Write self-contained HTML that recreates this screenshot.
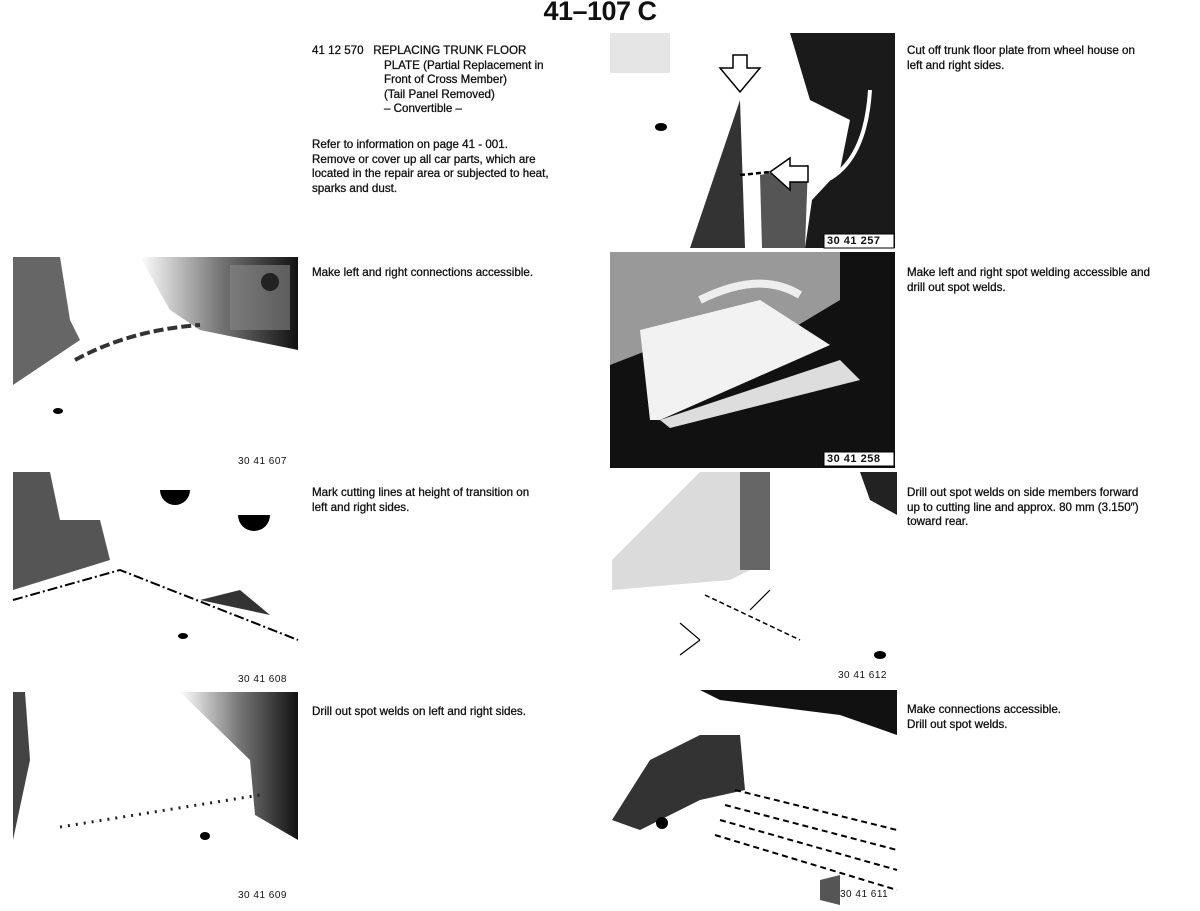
<!DOCTYPE html>
<html><head><meta charset="utf-8"><style>
html,body{margin:0;padding:0;background:#fff;}
body{width:1200px;height:911px;position:relative;overflow:hidden;font-family:"Liberation Sans",sans-serif;color:#111;}
.t{position:absolute;font-size:11.6px;line-height:14.6px;white-space:nowrap;-webkit-text-stroke:0.3px #111;}
.lbl{position:absolute;font-size:10px;letter-spacing:0.5px;white-space:nowrap;}
h1{position:absolute;left:0;width:1200px;top:-4px;margin:0;text-align:center;font-size:27px;font-weight:bold;letter-spacing:-0.5px;}
svg{position:absolute;left:0;top:0;}
svg path{fill:none;}
</style></head><body>
<svg width="1200" height="911" viewBox="0 0 1200 911">
<defs>
<linearGradient id="gL" x1="0" x2="1"><stop offset="0" stop-color="#fff"/><stop offset="0.5" stop-color="#777"/><stop offset="1" stop-color="#111"/></linearGradient>
</defs>
<!-- top right photo 30 41 257 -->
<rect x="610" y="33" width="285" height="215" fill="#fff"/>
<rect x="610" y="33" width="60" height="40" fill="#ccc" opacity="0.5"/>
<polygon points="790,33 895,33 895,248 805,248 812,200 840,170 850,120 810,100" fill="#1a1a1a"/>
<polygon points="690,248 740,100 745,248" fill="#333"/>
<polygon points="760,175 808,165 805,248 762,248" fill="#555"/>
<path d="M815,185 Q865,170 870,90" stroke="#fff" stroke-width="4"/>
<ellipse cx="661" cy="127" rx="6" ry="4" fill="#000"/>
<polygon points="733,55 747,55 747,68 760,68 740,92 720,68 733,68" fill="#fff" stroke="#000" stroke-width="1.5"/>
<path d="M740,175 L770,172" stroke="#000" stroke-width="2.5" stroke-dasharray="5,3"/>
<polygon points="770,172 790,158 790,166 808,166 808,182 790,182 790,190" fill="#fff" stroke="#000" stroke-width="1.5"/>
<rect x="824" y="234" width="70" height="14" fill="#fff" stroke="#000"/>
<!-- photo 30 41 258 -->
<rect x="610" y="252" width="285" height="216" fill="#111"/>
<polygon points="610,252 840,252 840,300 790,330 700,330 610,365" fill="#999"/>
<polygon points="640,330 760,300 830,345 660,420 650,420" fill="#f2f2f2"/>
<polygon points="660,420 840,360 860,380 670,428" fill="#ddd"/>
<path d="M700,300 Q760,270 800,295" stroke="#eee" stroke-width="8"/>
<rect x="824" y="452" width="70" height="14" fill="#fff" stroke="#000"/>
<!-- left photo 30 41 607 -->
<rect x="13" y="257" width="285" height="190" fill="#fff"/>
<polygon points="13,257 60,257 70,320 80,340 13,385" fill="#666"/>
<polygon points="140,257 298,257 298,350 200,330 170,310" fill="url(#gL)"/>
<rect x="230" y="265" width="60" height="65" fill="#888" opacity="0.6"/>
<circle cx="270" cy="282" r="9" fill="#222"/>
<path d="M75,360 Q130,330 200,325" stroke="#333" stroke-width="4" stroke-dasharray="10,4"/>
<ellipse cx="58" cy="411" rx="5" ry="3" fill="#000"/>
<!-- left photo 30 41 608 -->
<rect x="13" y="472" width="285" height="193" fill="#fff"/>
<polygon points="13,472 50,472 60,520 100,520 110,560 13,590" fill="#555"/>
<path d="M160,490 a15,15 0 0 0 30,0 z" style="fill:#000"/>
<path d="M238,515 a16,16 0 0 0 32,0 z" style="fill:#000"/>
<path d="M13,600 L120,570 L298,640" stroke="#000" stroke-width="2" stroke-dasharray="10,3,2,3"/>
<polygon points="200,600 240,590 270,615" fill="#333"/>
<ellipse cx="183" cy="636" rx="5" ry="3" fill="#000"/>
<!-- left photo 30 41 609 -->
<rect x="13" y="692" width="285" height="155" fill="#fff"/>
<polygon points="180,692 298,692 298,840 255,815 250,760" fill="url(#gL)"/>
<polygon points="13,692 25,692 30,760 13,840" fill="#444"/>
<path d="M60,827 L260,795" stroke="#222" stroke-width="3" stroke-dasharray="2,6"/>
<ellipse cx="205" cy="836" rx="5" ry="4" fill="#000"/>
<!-- right photo 30 41 612 -->
<rect x="612" y="472" width="285" height="190" fill="#fff"/>
<polygon points="700,472 760,472 770,560 730,580 612,590 612,560" fill="#ccc" opacity="0.7"/>
<polygon points="740,472 770,472 770,570 740,570" fill="#666"/>
<polygon points="860,472 897,472 897,515 870,500" fill="#222"/>
<path d="M705,595 L800,640" stroke="#000" stroke-width="1.5" stroke-dasharray="5,3"/>
<path d="M680,623 L700,640" stroke="#000" stroke-width="1.2"/>
<path d="M680,655 L700,640 M770,590 L750,610" stroke="#000" stroke-width="1.2"/>
<ellipse cx="880" cy="655" rx="6" ry="4" fill="#000"/>
<!-- right photo 30 41 611 -->
<rect x="612" y="690" width="285" height="215" fill="#fff"/>
<polygon points="700,690 897,690 897,735 840,715 720,700" fill="#111"/>
<polygon points="612,820 650,760 700,735 740,735 745,790 700,800 640,830" fill="#333"/>
<g stroke="#000" stroke-width="2" stroke-dasharray="6,4">
<path d="M735,790 L897,830"/><path d="M725,805 L897,850"/><path d="M720,820 L897,870"/><path d="M715,835 L897,890"/>
</g>
<circle cx="662" cy="823" r="6" fill="#000"/>
<polygon points="820,880 840,875 840,905 820,900" fill="#555"/>
</svg>
<h1>41–107 C</h1>
<div class="t" style="left:312px;top:44px">41 12 570&nbsp;&nbsp;&nbsp;REPLACING TRUNK FLOOR</div>
<div class="t" style="left:384px;top:58.6px">PLATE (Partial Replacement in<br>Front of Cross Member)<br>(Tail Panel Removed)<br>– Convertible –</div>
<div class="t" style="left:312px;top:138px">Refer to information on page 41 - 001.<br>Remove or cover up all car parts, which are<br>located in the repair area or subjected to heat,<br>sparks and dust.</div>
<div class="t" style="left:907px;top:44px">Cut off trunk floor plate from wheel house on<br>left and right sides.</div>
<div class="t" style="left:312px;top:266px">Make left and right connections accessible.</div>
<div class="t" style="left:907px;top:266px">Make left and right spot welding accessible and<br>drill out spot welds.</div>
<div class="t" style="left:312px;top:486px">Mark cutting lines at height of transition on<br>left and right sides.</div>
<div class="t" style="left:907px;top:486px">Drill out spot welds on side members forward<br>up to cutting line and approx. 80 mm (3.150″)<br>toward rear.</div>
<div class="t" style="left:312px;top:705px">Drill out spot welds on left and right sides.</div>
<div class="t" style="left:907px;top:703px">Make connections accessible.<br>Drill out spot welds.</div>
<div class="lbl" style="left:827px;top:235px;font-weight:bold;font-size:11px">30 41 257</div>
<div class="lbl" style="left:827px;top:453px;font-weight:bold;font-size:11px">30 41 258</div>
<div class="lbl" style="left:238px;top:456px">30 41 607</div>
<div class="lbl" style="left:238px;top:674px">30 41 608</div>
<div class="lbl" style="left:238px;top:890px">30 41 609</div>
<div class="lbl" style="left:838px;top:670px">30 41 612</div>
<div class="lbl" style="left:840px;top:889px">30 41 611</div>
</body></html>
